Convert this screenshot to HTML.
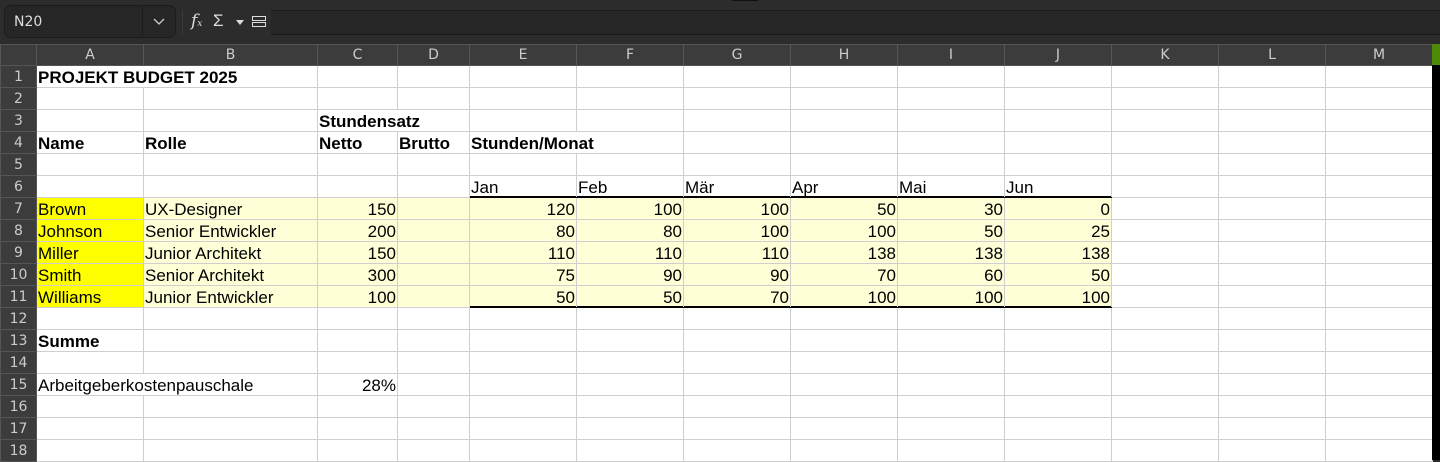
<!DOCTYPE html>
<html><head><meta charset="utf-8"><style>
body{margin:0;width:1440px;height:460px;overflow:hidden;background:#2c2c2c;font-family:"Liberation Sans",sans-serif;position:relative}
.tb{position:absolute;left:0;top:0;width:1440px;height:44px;background:#2c2c2c}
.nb{position:absolute;left:4px;top:5px;width:172px;height:33px;border:1px solid #1c1c1c;border-radius:7px;background:#262626;box-sizing:border-box}
.nb span{position:absolute;left:9px;top:8px;color:#ddd;font-size:14px;font-family:"DejaVu Sans",sans-serif}
.nb i{position:absolute;left:137px;top:0;width:1px;height:31px;background:#1c1c1c}
.fx{position:absolute;left:271px;top:10px;width:1169px;height:25px;background:#262626;border-top:1px solid #1a1a1a;border-bottom:1px solid #1a1a1a;box-sizing:border-box}
.ic{position:absolute;color:#ddd;font-size:17px;top:11px}
table{position:absolute;left:0;top:44px;width:1432px;border-collapse:collapse;table-layout:fixed}
td{height:22px;border:1px solid #cfcfcf;padding:0 1px;font-size:17px;color:#000;background:#fff;white-space:nowrap;overflow:visible;box-sizing:border-box;line-height:19px;vertical-align:bottom}
td.h{background:#3c3c3c;color:#ccc;border-color:#555;text-align:center;font-size:14px;font-family:"DejaVu Sans",sans-serif;vertical-align:middle;line-height:20px}
tr.hr td{height:21px}
.b{font-weight:bold}.r{text-align:right}.y{background:#ffff00}.ly{background:#ffffd7}
.bb{border-bottom:1px solid #000;box-shadow:inset 0 -1px 0 #000}
.ov{border-right-style:hidden}
.sb{position:absolute;left:1432px;top:44px;width:8px;height:416px;background:#000}
.sb i{display:block;height:21px;background:#4e8a08}
</style></head><body>
<div class="tb">
<div style="position:absolute;left:732px;top:0;width:26px;height:1px;background:#111"></div>
<div class="nb"><span>N20</span><i></i><svg style="position:absolute;left:148px;top:12px" width="12" height="8"><path d="M1 1l5 5 5-5" stroke="#ccc" fill="none" stroke-width="1.3"/></svg></div>
<div style="position:absolute;left:182px;top:10px;width:1px;height:24px;background:#3a3a3a"></div>
<span class="ic" style="left:191px;font-style:italic;font-family:'DejaVu Serif',serif">f<span style="font-size:9px">x</span></span>
<span class="ic" style="left:213px">Σ</span>
<svg style="position:absolute;left:236px;top:20px" width="8" height="5"><path d="M0 0h8L4 5z" fill="#ddd"/></svg>
<svg style="position:absolute;left:252px;top:16px" width="14" height="11"><rect x="0.5" y="0.5" width="13" height="4" fill="none" stroke="#ddd"/><rect x="0.5" y="6.5" width="13" height="4" fill="none" stroke="#ddd"/></svg>
<div class="fx"></div>
</div>
<table>
<colgroup><col style="width:36px"><col style="width:107px"><col style="width:174px"><col style="width:80px"><col style="width:72px"><col style="width:107px"><col style="width:107px"><col style="width:107px"><col style="width:107px"><col style="width:107px"><col style="width:107px"><col style="width:107px"><col style="width:107px"><col style="width:107px"></colgroup>
<tr class="hr"><td class="h"></td><td class="h">A</td><td class="h">B</td><td class="h">C</td><td class="h">D</td><td class="h">E</td><td class="h">F</td><td class="h">G</td><td class="h">H</td><td class="h">I</td><td class="h">J</td><td class="h">K</td><td class="h">L</td><td class="h">M</td></tr>
<tr><td class="h">1</td><td class="b ov">PROJEKT BUDGET 2025</td><td></td><td></td><td></td><td></td><td></td><td></td><td></td><td></td><td></td><td></td><td></td><td></td></tr>
<tr><td class="h">2</td><td></td><td></td><td></td><td></td><td></td><td></td><td></td><td></td><td></td><td></td><td></td><td></td><td></td></tr>
<tr><td class="h">3</td><td></td><td></td><td class="b ov">Stundensatz</td><td></td><td></td><td></td><td></td><td></td><td></td><td></td><td></td><td></td><td></td></tr>
<tr><td class="h">4</td><td class="b">Name</td><td class="b">Rolle</td><td class="b">Netto</td><td class="b">Brutto</td><td class="b ov">Stunden/Monat</td><td></td><td></td><td></td><td></td><td></td><td></td><td></td><td></td></tr>
<tr><td class="h">5</td><td></td><td></td><td></td><td></td><td></td><td></td><td></td><td></td><td></td><td></td><td></td><td></td><td></td></tr>
<tr><td class="h">6</td><td></td><td></td><td></td><td></td><td class="bb">Jan</td><td class="bb">Feb</td><td class="bb">Mär</td><td class="bb">Apr</td><td class="bb">Mai</td><td class="bb">Jun</td><td></td><td></td><td></td></tr>
<tr><td class="h">7</td><td class="y">Brown</td><td class="ly">UX-Designer</td><td class="ly r">150</td><td class="ly"></td><td class="ly r">120</td><td class="ly r">100</td><td class="ly r">100</td><td class="ly r">50</td><td class="ly r">30</td><td class="ly r">0</td><td></td><td></td><td></td></tr>
<tr><td class="h">8</td><td class="y">Johnson</td><td class="ly">Senior Entwickler</td><td class="ly r">200</td><td class="ly"></td><td class="ly r">80</td><td class="ly r">80</td><td class="ly r">100</td><td class="ly r">100</td><td class="ly r">50</td><td class="ly r">25</td><td></td><td></td><td></td></tr>
<tr><td class="h">9</td><td class="y">Miller</td><td class="ly">Junior Architekt</td><td class="ly r">150</td><td class="ly"></td><td class="ly r">110</td><td class="ly r">110</td><td class="ly r">110</td><td class="ly r">138</td><td class="ly r">138</td><td class="ly r">138</td><td></td><td></td><td></td></tr>
<tr><td class="h">10</td><td class="y">Smith</td><td class="ly">Senior Architekt</td><td class="ly r">300</td><td class="ly"></td><td class="ly r">75</td><td class="ly r">90</td><td class="ly r">90</td><td class="ly r">70</td><td class="ly r">60</td><td class="ly r">50</td><td></td><td></td><td></td></tr>
<tr><td class="h">11</td><td class="y">Williams</td><td class="ly">Junior Entwickler</td><td class="ly r">100</td><td class="ly"></td><td class="ly r bb">50</td><td class="ly r bb">50</td><td class="ly r bb">70</td><td class="ly r bb">100</td><td class="ly r bb">100</td><td class="ly r bb">100</td><td></td><td></td><td></td></tr>
<tr><td class="h">12</td><td></td><td></td><td></td><td></td><td></td><td></td><td></td><td></td><td></td><td></td><td></td><td></td><td></td></tr>
<tr><td class="h">13</td><td class="b">Summe</td><td></td><td></td><td></td><td></td><td></td><td></td><td></td><td></td><td></td><td></td><td></td><td></td></tr>
<tr><td class="h">14</td><td></td><td></td><td></td><td></td><td></td><td></td><td></td><td></td><td></td><td></td><td></td><td></td><td></td></tr>
<tr><td class="h">15</td><td class="ov">Arbeitgeberkostenpauschale</td><td></td><td class="r">28%</td><td></td><td></td><td></td><td></td><td></td><td></td><td></td><td></td><td></td><td></td></tr>
<tr><td class="h">16</td><td></td><td></td><td></td><td></td><td></td><td></td><td></td><td></td><td></td><td></td><td></td><td></td><td></td></tr>
<tr><td class="h">17</td><td></td><td></td><td></td><td></td><td></td><td></td><td></td><td></td><td></td><td></td><td></td><td></td><td></td></tr>
<tr><td class="h">18</td><td></td><td></td><td></td><td></td><td></td><td></td><td></td><td></td><td></td><td></td><td></td><td></td><td></td></tr>
</table>
<div class="sb"><i></i></div>
</body></html>
